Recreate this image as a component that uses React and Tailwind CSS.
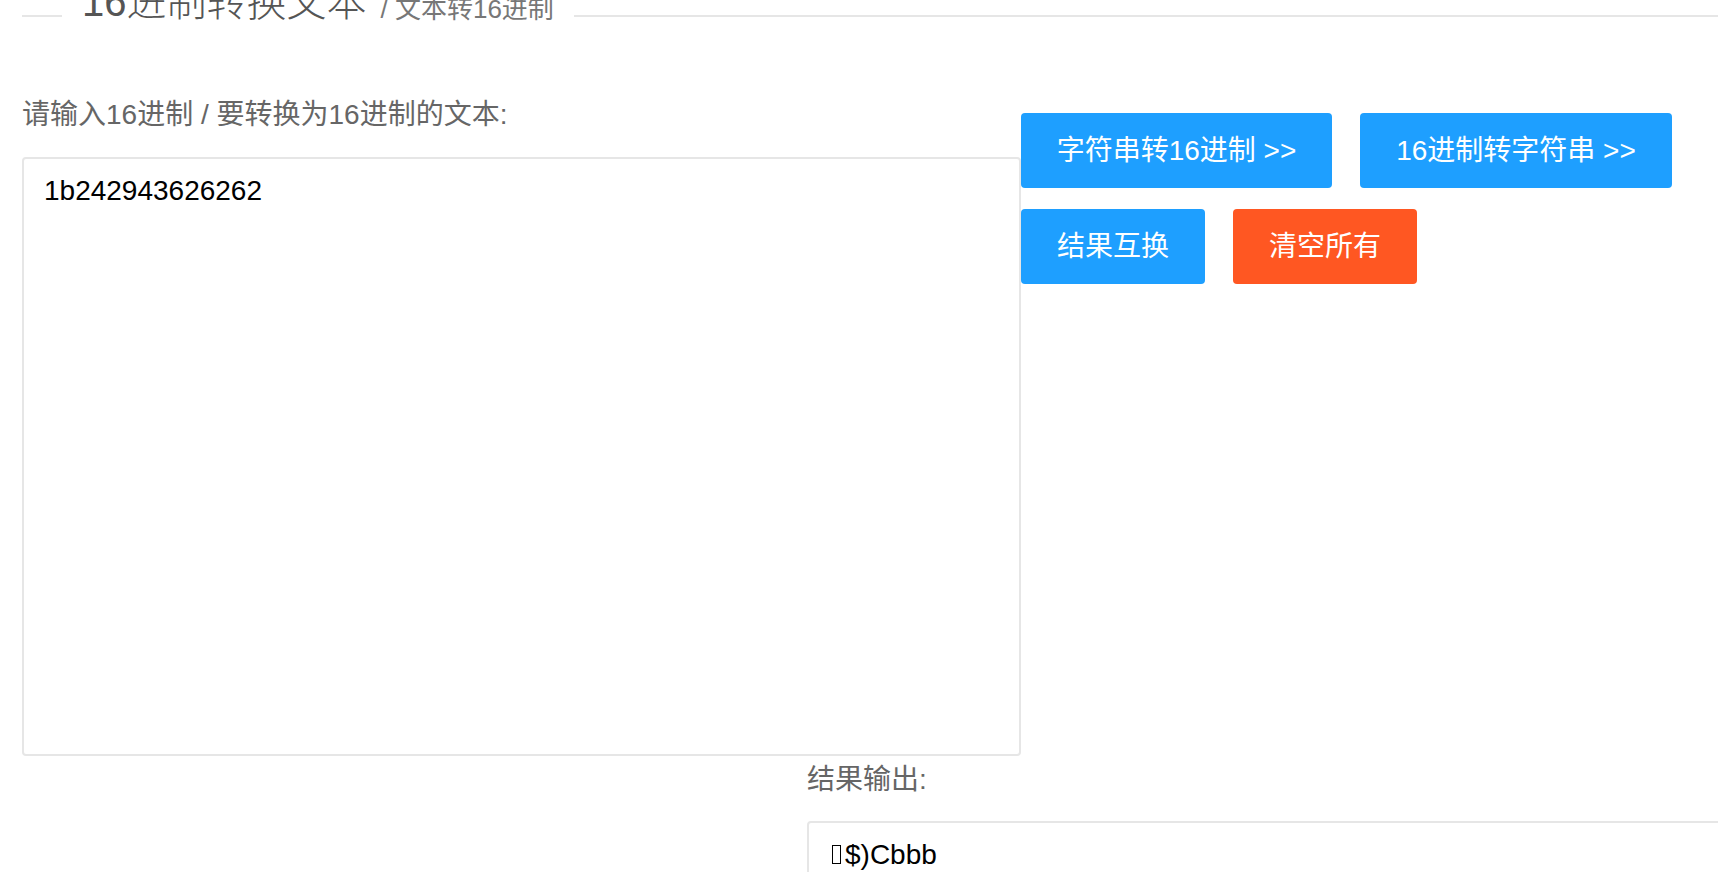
export default function App() {
  const font = "font-['Liberation_Sans','Noto_Sans_CJK_SC',sans-serif]";

  return (
    <div className={`w-screen h-screen overflow-hidden bg-white ${font}`}>
      {/* fieldset title, scrolled half out of view */}
      <div className="flex items-start">
        <div className="ml-[22px] mt-[15px] h-[2px] w-[40px] bg-[#e6e6e6]" />
        <div className="flex items-start px-[20px] -mt-[18px]">
          <span className="text-[40px] leading-[40px] font-light text-[#555]">16进制转换文本</span>
          <span className="ml-[14px] mt-[14px] text-[26px] leading-[26px] text-[#777]">/ 文本转16进制</span>
        </div>
        <div className="mt-[15px] h-[2px] flex-1 bg-[#e6e6e6]" />
      </div>

      {/* input + actions */}
      <div className="flex items-start pl-[22px] mt-[72px]">
        <div className="w-[999px] shrink-0">
          <div className="text-[28px] leading-[42px] text-[#666]">请输入16进制 / 要转换为16进制的文本:</div>
          <textarea
            className="mt-[21px] block w-full h-[599px] border-2 border-[#e6e6e6] rounded-[4px] px-[20px] py-[12px] text-[28px] leading-[40px] text-black resize-none outline-none"
            defaultValue="1b242943626262"
          />
        </div>
        <div className="mt-[19px] flex flex-col gap-[21px]">
          <div className="flex gap-[28px]">
            <button className="w-[311px] h-[75px] rounded-[4px] bg-[#1E9FFF] text-white text-[28px]">字符串转16进制 &gt;&gt;</button>
            <button className="w-[312px] h-[75px] rounded-[4px] bg-[#1E9FFF] text-white text-[28px]">16进制转字符串 &gt;&gt;</button>
          </div>
          <div className="flex gap-[28px]">
            <button className="w-[184px] h-[75px] rounded-[4px] bg-[#1E9FFF] text-white text-[28px]">结果互换</button>
            <button className="w-[184px] h-[75px] rounded-[4px] bg-[#FF5722] text-white text-[28px]">清空所有</button>
          </div>
        </div>
      </div>

      {/* output */}
      <div className="ml-[807px] mt-[3px] w-[1000px] shrink-0">
        <div className="text-[28px] leading-[42px] text-[#666]">结果输出:</div>
        <div className="mt-[20px] h-[200px] border-2 border-[#e6e6e6] rounded-[4px] px-[20px] py-[12px] text-[28px] leading-[40px] text-black">
          <span className="inline-block w-[9px] h-[19px] border-[1.5px] border-black ml-[3px] mr-[4px]" />
          $)Cbbb
        </div>
      </div>
    </div>
  );
}
